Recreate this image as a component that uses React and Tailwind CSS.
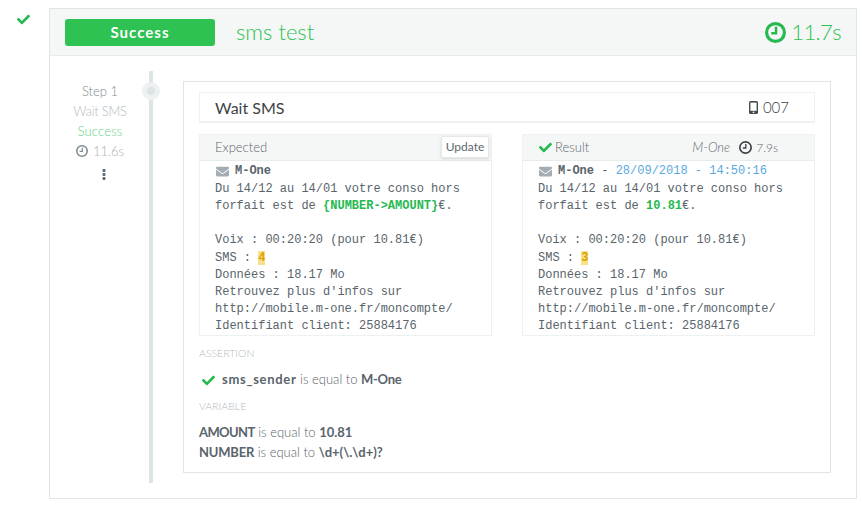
import React from "react";
import { FaCheck, FaEnvelope } from "react-icons/fa";

const Clock = ({ size = 12, color = "currentColor", sw = 2.6 }) => (
  <svg width={size} height={size} viewBox="0 0 20 20" fill="none" stroke={color} className="shrink-0">
    <circle cx="10" cy="10" r={10 - sw / 2} strokeWidth={sw} />
    <path d="M10.5 4.5V10.8H6" strokeWidth={sw * 0.8} />
  </svg>
);

const Phone = () => (
  <svg width="9" height="13" viewBox="0 0 9 13" className="shrink-0">
    <rect x="0" y="0" width="9" height="13" rx="1.6" fill="#444b4f" />
    <rect x="1.4" y="1.6" width="6.2" height="8.2" fill="#fff" />
    <circle cx="4.5" cy="11.4" r="0.8" fill="#fff" />
  </svg>
);

const Dots = () => (
  <svg width="4" height="11" viewBox="0 0 4 11" fill="#5f6b72">
    <rect x="0.5" y="0" width="3" height="3" rx="1" />
    <rect x="0.5" y="4" width="3" height="3" rx="1" />
    <rect x="0.5" y="8" width="3" height="3" rx="1" />
  </svg>
);

const Body = ({ children }) => (
  <div className="whitespace-pre font-['Liberation_Mono',monospace] text-[12px] leading-[17.14px] text-[#59646b] pl-[15px] mt-[1px] h-[155px] overflow-hidden">
    {children}
  </div>
);

const Yellow = ({ children }) => (
  <span className="bg-[#fbe08a] text-[#d9a406] font-bold">{children}</span>
);

const Sender = ({ children }) => (
  <div className="flex items-center h-[17px] pl-[1px] mt-[2px]">
    <FaEnvelope size={13} color="#a3adb3" className="mr-[6px]" />
    <span className="font-['Liberation_Mono',monospace] text-[12px] leading-[17px] whitespace-pre text-[#59646b]">
      {children}
    </span>
  </div>
);

const PanelHead = ({ children }) => (
  <div className="relative flex items-center h-[26px] bg-[#f5f7f7] border-b border-[#e6ebec] pl-[15px] text-[13px] font-light text-[#5d686e]">
    {children}
  </div>
);

const Message = ({ value, digit }) => (
  <Body>
    {"Du 14/12 au 14/01 votre conso hors\nforfait est de "}
    {value}
    {"\n\nVoix : 00:20:20 (pour 10.81€)\nSMS : "}
    <Yellow>{digit}</Yellow>
    {"\nDonnées : 18.17 Mo\nRetrouvez plus d'infos sur\nhttp://mobile.m-one.fr/moncompte/\nIdentifiant client: 25884176"}
  </Body>
);

export default function App() {
  return (
    <div className="flex w-[862px] h-[511px] bg-white pt-[8px] font-['Lato',sans-serif] overflow-hidden">
      <div className="w-[49px] shrink-0 pl-[17px] pt-[5px]">
        <FaCheck size={13} color="#25b94f" />
      </div>
      <div className="w-[808px] h-[491px] border border-[#e0e6e7] flex flex-col">
        <div className="h-[47px] shrink-0 flex items-center bg-[#f5f7f7] border-b border-[#e6ebec] pl-[15px] pr-[15px]">
          <div className="w-[150px] h-[27px] rounded-[3px] bg-[#2dc251] text-white text-[15px] tracking-[1px] font-bold flex items-center justify-center">
            Success
          </div>
          <div className="ml-[21px] text-[22px] font-light text-[#2dc251] leading-none">sms test</div>
          <div className="ml-auto flex items-center gap-[5px] text-[22px] tracking-[-0.6px] font-light text-[#2dc251] leading-none">
            <Clock size={21} color="#25b94f" sw={3} />
            11.7s
          </div>
        </div>
        <div className="flex flex-1 pt-[15px] min-h-0">
          <div className="w-[100px] -mr-[1px] shrink-0 pt-[10px] flex flex-col items-center text-[13px] font-light leading-[20px]">
            <div className="text-[#7f8c93]">Step 1</div>
            <div className="text-[#b3bbc0] tracking-[-0.25px]">Wait SMS</div>
            <div className="text-[#68d286] tracking-[0.2px]">Success</div>
            <div className="flex items-center gap-[5px] text-[#a9b2b7]">
              <Clock size={12} color="#7f8c93" />
              11.6s
            </div>
            <div className="mt-[8px] ml-[8px] h-[11px] flex"><Dots /></div>
          </div>
          <div className="relative w-[4px] h-[412px] shrink-0 bg-[#dde4e5]">
            <div className="absolute left-[-7px] top-[11px] w-[18px] h-[18px] rounded-full bg-[#eef1f2] flex items-center justify-center">
              <div className="w-[8px] h-[8px] rounded-full bg-[#dde4e5]"></div>
            </div>
          </div>
          <div className="ml-[30px] mt-[10px] w-[648px] h-[392px] border border-[#e0e6e7] shrink-0 px-[15px] pt-[10px]">
            <div className="h-[31px] border border-[#eef1f2] border-b-2 flex items-center pl-[15px] pr-[25px] text-[#3d4346]">
              <span className="text-[16px] pt-[2px]">Wait SMS</span>
              <span className="ml-auto flex items-center gap-[5px] text-[15px] font-light">
                <Phone />
                007
              </span>
            </div>
            <div className="flex gap-[30px] mt-[11px]">
              <div className="w-[293px] h-[202px] border border-[#eef1f2] shrink-0">
                <PanelHead>
                  Expected
                  <div className="absolute right-[2px] top-[1px] w-[48px] h-[22px] bg-white border border-[#e3e8e9] rounded-[2px] shadow-sm flex items-center justify-center text-[12px] font-normal text-[#5d686e]">
                    Update
                  </div>
                </PanelHead>
                <div className="pl-[15px]">
                  <Sender><b>M-One</b></Sender>
                </div>
                <Message
                  digit="4"
                  value={<><b className="text-[#25b94f]">{"{NUMBER->AMOUNT}"}</b>€.</>}
                />
              </div>
              <div className="w-[293px] h-[202px] border border-[#eef1f2] shrink-0">
                <PanelHead>
                  <FaCheck size={13} color="#25b94f" className="mr-[3px] ml-[1px]" />
                  Result
                  <span className="ml-auto italic">M-One</span>
                  <span className="flex items-center gap-[4px] ml-[9px] mr-[36px] text-[12px]">
                    <Clock size={13} color="#3d4346" />
                    7.9s
                  </span>
                </PanelHead>
                <div className="pl-[15px]">
                  <Sender>
                    <b>M-One</b>{" - "}
                    <span className="text-[#5aa9e0]">28/09/2018 - 14:50:16</span>
                  </Sender>
                </div>
                <Message
                  digit="3"
                  value={<><b className="text-[#25b94f]">10.81</b>€.</>}
                />
              </div>
            </div>
            <div className="mt-[10px] text-[10.5px] font-light text-[#b3bbc0] leading-[14px]">ASSERTION</div>
            <div className="mt-[10px] flex items-center h-[20px] pl-[3px] text-[13px] text-[#59646b]">
              <FaCheck size={13} color="#25b94f" className="mr-[7px]" />
              <span className="font-light"><b className="font-bold tracking-[0.7px]">sms_sender</b> is equal to <b className="font-bold tracking-[-0.3px]">M-One</b></span>
            </div>
            <div className="mt-[9px] text-[10.5px] font-light text-[#b3bbc0] leading-[14px]">VARIABLE</div>
            <div className="mt-[9px] text-[13px] leading-[20px] font-light text-[#59646b]">
              <div><b className="font-bold tracking-[-0.6px]">AMOUNT</b> is equal to <b className="font-bold">10.81</b></div>
              <div><b className="font-bold tracking-[-0.2px]">NUMBER</b> is equal to <b className="font-bold">{"\\d+(\\.\\d+)?"}</b></div>
            </div>
          </div>
        </div>
      </div>
    </div>
  );
}
